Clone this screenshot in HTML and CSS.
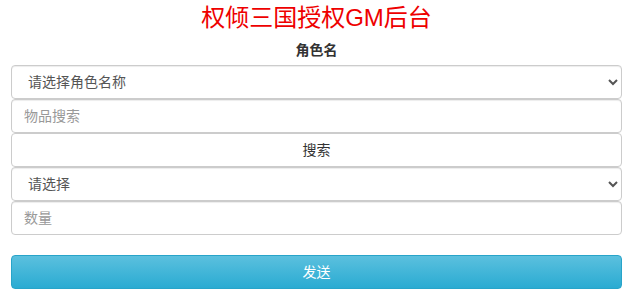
FILE: index.html
```html
<!DOCTYPE html>
<html lang="zh-CN">
<head>
<meta charset="utf-8">
<title>权倾三国授权GM后台</title>
<link rel="stylesheet" href="styles.css">
</head>
<body>
<div class="page">
  <h1 class="title">权倾三国授权GM后台</h1>
  <form class="form">
    <label class="label">角色名</label>
    <select class="control">
      <option>请选择角色名称</option>
    </select>
    <input class="control" type="text" placeholder="物品搜索">
    <button type="button" class="btn btn-default">搜索</button>
    <select class="control">
      <option>请选择</option>
    </select>
    <input class="control" type="text" placeholder="数量">
    <button type="button" class="btn btn-info">发送</button>
  </form>
</div>
</body>
</html>
```

FILE: styles.css
```css
* { box-sizing: border-box; }
html, body { margin: 0; padding: 0; background: #fff; }
body {
  font-family: "Liberation Sans", "Noto Sans CJK SC", sans-serif;
  font-size: 14px;
  line-height: 20px;
  color: #333;
}
.page { padding: 0 6px 0 11px; }
.title {
  margin: 3px 0 7px;
  font-size: 24px;
  line-height: 30px;
  font-weight: normal;
  color: #e00;
  text-align: center;
}
.form { display: flex; flex-direction: column; }
.label {
  display: block;
  text-align: center;
  font-weight: bold;
  margin-bottom: 5px;
  color: #333;
}
.control {
  display: block;
  width: 100%;
  height: 34px;
  padding: 6px 12px;
  font-family: inherit;
  font-size: 14px;
  line-height: 20px;
  color: #555;
  background: #fff;
  border: 1px solid #ccc;
  border-radius: 4px;
  box-shadow: inset 0 1px 1px rgba(0,0,0,.075);
}
.control::placeholder { color: #999; }
.btn {
  display: block;
  width: 100%;
  height: 34px;
  padding: 6px 12px;
  font-family: inherit;
  font-size: 14px;
  line-height: 20px;
  text-align: center;
  border: 1px solid transparent;
  border-radius: 4px;
}
.btn-default {
  color: #333;
  background: #fff;
  border-color: #ccc;
}
.btn-info {
  margin-top: 20px;
  color: #fff;
  background: linear-gradient(to bottom, #5bc0de 0%, #2aabd2 100%);
  border-color: #28a4c9;
}
```
